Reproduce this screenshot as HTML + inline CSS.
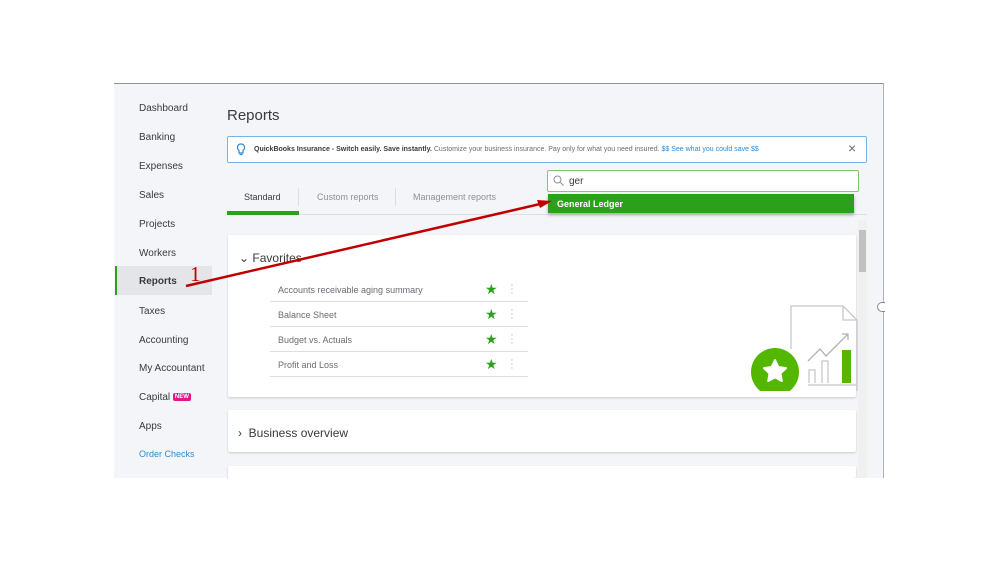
<!DOCTYPE html>
<html><head><style>
*{margin:0;padding:0;box-sizing:border-box}
body{width:999px;height:562px;background:#fff;position:relative;overflow:hidden;font-family:"Liberation Sans",sans-serif;color:#393a3d}
.a{position:absolute}
.scr{left:114px;top:83px;width:770px;height:395px;background:#f4f5f8;border-top:1px solid #8d9096;border-right:1px solid #b0b3b8;overflow:hidden}
.nav{font-size:10px;color:#393a3d;left:139px}
.card{background:#fff;box-shadow:0 1px 2px #c8cace;border-radius:2px}
.row{left:270px;width:258px;height:25px;border-bottom:1px solid #dcdee2;font-size:9px;color:#6b6c72;padding:8px 0 0 8px}
.star{left:485px;color:#2ca01c;font-size:14px}
.dots{left:510px;color:#b0b3b8;font-size:11px;line-height:4px;width:4px;text-align:center}
</style></head><body>
<div class="a scr"></div>
<div class="a" style="left:115px;top:266px;width:97px;height:29px;background:#e4e5e8;border-left:2px solid #2ca01c"></div>
<div class="a nav" style="top:103px">Dashboard</div>
<div class="a nav" style="top:132px">Banking</div>
<div class="a nav" style="top:161px">Expenses</div>
<div class="a nav" style="top:190px">Sales</div>
<div class="a nav" style="top:219px">Projects</div>
<div class="a nav" style="top:248px">Workers</div>
<div class="a nav" style="top:276px;font-weight:bold">Reports</div>
<div class="a nav" style="top:306px">Taxes</div>
<div class="a nav" style="top:335px">Accounting</div>
<div class="a nav" style="top:363px">My Accountant</div>
<div class="a nav" style="top:392px">Capital <span style="background:#e3168b;color:#fff;font-size:6px;font-weight:bold;padding:1px 2px;border-radius:2px;vertical-align:2px">NEW</span></div>
<div class="a nav" style="top:421px">Apps</div>
<div class="a nav" style="top:449px;color:#2f8bd4;font-size:9px">Order Checks</div>

<div class="a" style="left:227px;top:107px;font-size:15px;color:#393a3d">Reports</div>
<div class="a" style="left:227px;top:136px;width:640px;height:27px;background:#fff;border:1px solid #75b4e8;border-radius:2px;font-size:7px;color:#6b6c72;padding:9px 0 0 26px;white-space:nowrap"><b style="color:#393a3d">QuickBooks Insurance - Switch easily. Save instantly.</b> Customize your business insurance. Pay only for what you need insured. <span style="color:#2f8bd4">$$ See what you could save $$</span></div>
<svg class="a" style="left:236px;top:143px" width="10" height="14" viewBox="0 0 10 14"><path d="M5 1a3.5 3.5 0 0 0-2 6.4V10h4V7.4A3.5 3.5 0 0 0 5 1zM3.5 11.5h3" fill="none" stroke="#2f8bd4" stroke-width="1.2"/></svg>
<div class="a" style="left:848px;top:140px;font-size:14px;color:#6b6c72">×</div>

<div class="a" style="left:227px;top:187px;width:640px;height:28px;border-bottom:1px solid #dcdee2"></div>
<div class="a" style="left:244px;top:192px;font-size:9px">Standard</div>
<div class="a" style="left:227px;top:211px;width:72px;height:4px;background:#2ca01c"></div>
<div class="a" style="left:298px;top:188px;width:1px;height:18px;background:#dcdee2"></div>
<div class="a" style="left:317px;top:192px;font-size:9px;color:#8d9096">Custom reports</div>
<div class="a" style="left:395px;top:188px;width:1px;height:18px;background:#dcdee2"></div>
<div class="a" style="left:413px;top:192px;font-size:9px;color:#8d9096">Management reports</div>

<div class="a" style="left:547px;top:170px;width:312px;height:22px;background:#fff;border:1px solid #7dc96f;border-radius:2px;font-size:10px;padding:5px 0 0 21px;color:#393a3d">ger</div>
<svg class="a" style="left:553px;top:175px" width="11" height="11" viewBox="0 0 11 11"><circle cx="4.5" cy="4.5" r="3.5" fill="none" stroke="#8d9096" stroke-width="1"/><path d="M7 7l3.5 3.5" stroke="#8d9096"/></svg>
<div class="a" style="left:548px;top:194px;width:306px;height:19px;background:#2ca01c;color:#fff;font-size:9px;font-weight:bold;padding:5px 0 0 9px;box-shadow:0 2px 3px #aaa">General Ledger</div>

<div class="a card" style="left:228px;top:235px;width:628px;height:162px"></div>
<div class="a" style="left:858px;top:220px;width:9px;height:258px;background:#f0f0f0"></div>
<div class="a" style="left:859px;top:230px;width:7px;height:42px;background:#c1c1c1"></div>
<div class="a" style="left:239px;top:251px;font-size:12px;color:#393a3d">&#8964; Favorites</div>
<div class="a row" style="top:277px">Accounts receivable aging summary</div>
<div class="a row" style="top:302px">Balance Sheet</div>
<div class="a row" style="top:327px">Budget vs. Actuals</div>
<div class="a row" style="top:352px">Profit and Loss</div>
<div class="a star" style="top:281px">★</div><div class="a star" style="top:306px">★</div><div class="a star" style="top:331px">★</div><div class="a star" style="top:356px">★</div>
<div class="a dots" style="top:283px">·<br>·<br>·</div><div class="a dots" style="top:308px">·<br>·<br>·</div><div class="a dots" style="top:333px">·<br>·<br>·</div><div class="a dots" style="top:358px">·<br>·<br>·</div>

<svg class="a" style="left:748px;top:303px" width="110" height="88" viewBox="0 0 110 88">
<path d="M43 46V3h52l14 14v90" fill="none" stroke="#c6c8cc" stroke-width="1.3"/>
<path d="M95 3v14h14" fill="none" stroke="#c6c8cc" stroke-width="1.3"/>
<path d="M60 58l12-12 6 7 22-22M94 31h6v6" fill="none" stroke="#b0b3b8" stroke-width="1.3"/>
<path d="M61 80V67h6v13M74 80V58h6v22M60 82h48" fill="none" stroke="#c6c8cc" stroke-width="1.3"/>
<rect x="94" y="47" width="9" height="33" fill="#53b700"/>
<circle cx="27" cy="69" r="24" fill="#53b700"/>
<path d="M27 57l3.4 7 7.6 1.1-5.5 5.3 1.3 7.6L27 74.4l-6.8 3.6 1.3-7.6-5.5-5.3 7.6-1.1z" fill="#fff" stroke="#fff" stroke-linejoin="round" stroke-width="2"/>
</svg>

<div class="a card" style="left:228px;top:410px;width:628px;height:42px"></div>
<div class="a" style="left:238px;top:426px;font-size:12px">›&nbsp; Business overview</div>
<div class="a card" style="left:228px;top:466px;width:628px;height:12px"></div>
<div class="a" style="left:114px;top:478px;width:780px;height:84px;background:#fff"></div>
<div class="a" style="left:877px;top:302px;width:8px;height:10px;border:1px solid #888;border-right:none;border-radius:5px 0 0 5px;background:#fff"></div>

<svg class="a" style="left:0;top:0" width="999" height="562">
<line x1="186" y1="286" x2="540" y2="204" stroke="#c00000" stroke-width="2.5"/>
<path d="M552 201l-15-1 3 8z" fill="#c00000"/>
<text x="190" y="281" font-family="Liberation Serif" font-size="21" fill="#c00000">1</text>
</svg>
</body></html>
